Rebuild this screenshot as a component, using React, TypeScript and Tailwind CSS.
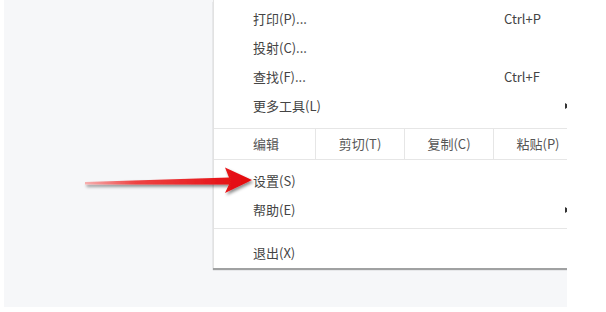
const items = [
  { label: "打印(P)...", shortcut: "Ctrl+P" },
  { label: "投射(C)..." },
  { label: "查找(F)...", shortcut: "Ctrl+F" },
  { label: "更多工具(L)", sub: true },
];

function SubMark() {
  return (
    <svg width="6" height="8" viewBox="0 0 6 8" className="shrink-0">
      <path d="M0 1 L5 4 L0 7 Z" fill="#333" />
    </svg>
  );
}

function Row({ label, shortcut, sub }: { label: string; shortcut?: string; sub?: boolean }) {
  return (
    <div className="flex h-[29px] items-center pl-[39px]">
      <span className={sub ? "w-[312px] shrink-0" : "w-[251px] shrink-0"}>{label}</span>
      {shortcut && <span>{shortcut}</span>}
      {sub && <SubMark />}
    </div>
  );
}

function Arrow() {
  return (
    <svg
      width="180"
      height="45"
      viewBox="0 0 180 45"
      className="absolute left-[80px] top-[160px]"
    >
      <defs>
        <linearGradient id="shaft" x1="0" x2="1" y1="0" y2="0">
          <stop offset="0" stopColor="#f6b0b0" />
          <stop offset="0.3" stopColor="#ee4444" />
          <stop offset="1" stopColor="#e3060c" />
        </linearGradient>
        <filter id="sh" x="-10%" y="-50%" width="120%" height="200%">
          <feDropShadow dx="1.5" dy="2.2" stdDeviation="1.4" floodColor="#000" floodOpacity="0.45" />
        </filter>
      </defs>
      <path
        d="M5 22 L149 17.5 L145 7.5 L172 20 L145 33 L149 24.5 L5 24.6 Z"
        fill="url(#shaft)"
        filter="url(#sh)"
      />
    </svg>
  );
}

export default function App() {
  return (
    <div className="relative h-[312px] w-[606px] overflow-hidden bg-white font-['Noto_Sans_CJK_SC',sans-serif] text-[13px] text-[#444]">
      <div className="ml-[4px] h-[307px] w-[563px] overflow-hidden bg-[#f6f7f9]">
        <div className="ml-[209px] w-[400px] border-l border-[#e2e2e2] bg-white pt-[4px] pb-[1px] shadow-[0_2px_1px_rgba(0,0,0,0.35)]">
          {items.map((it) => (
            <Row key={it.label} {...it} />
          ))}
          <div className="mt-[8px] flex h-[32px] items-center border-y border-[#e6e6e6] text-[#555]">
            <div className="flex h-full w-[101px] shrink-0 items-center pl-[39px]">编辑</div>
            <div className="flex h-full w-[89px] shrink-0 items-center justify-center border-l border-[#e6e6e6]">剪切(T)</div>
            <div className="flex h-full w-[89px] shrink-0 items-center justify-center border-l border-[#e6e6e6]">复制(C)</div>
            <div className="flex h-full w-[89px] shrink-0 items-center justify-center border-l border-[#e6e6e6]">粘贴(P)</div>
          </div>
          <div className="pt-[6px]">
            <Row label="设置(S)" />
            <Row label="帮助(E)" sub />
          </div>
          <div className="mt-[4px] border-t border-[#e6e6e6] pt-[9px]">
            <Row label="退出(X)" />
          </div>
        </div>
      </div>
      <Arrow />
    </div>
  );
}
